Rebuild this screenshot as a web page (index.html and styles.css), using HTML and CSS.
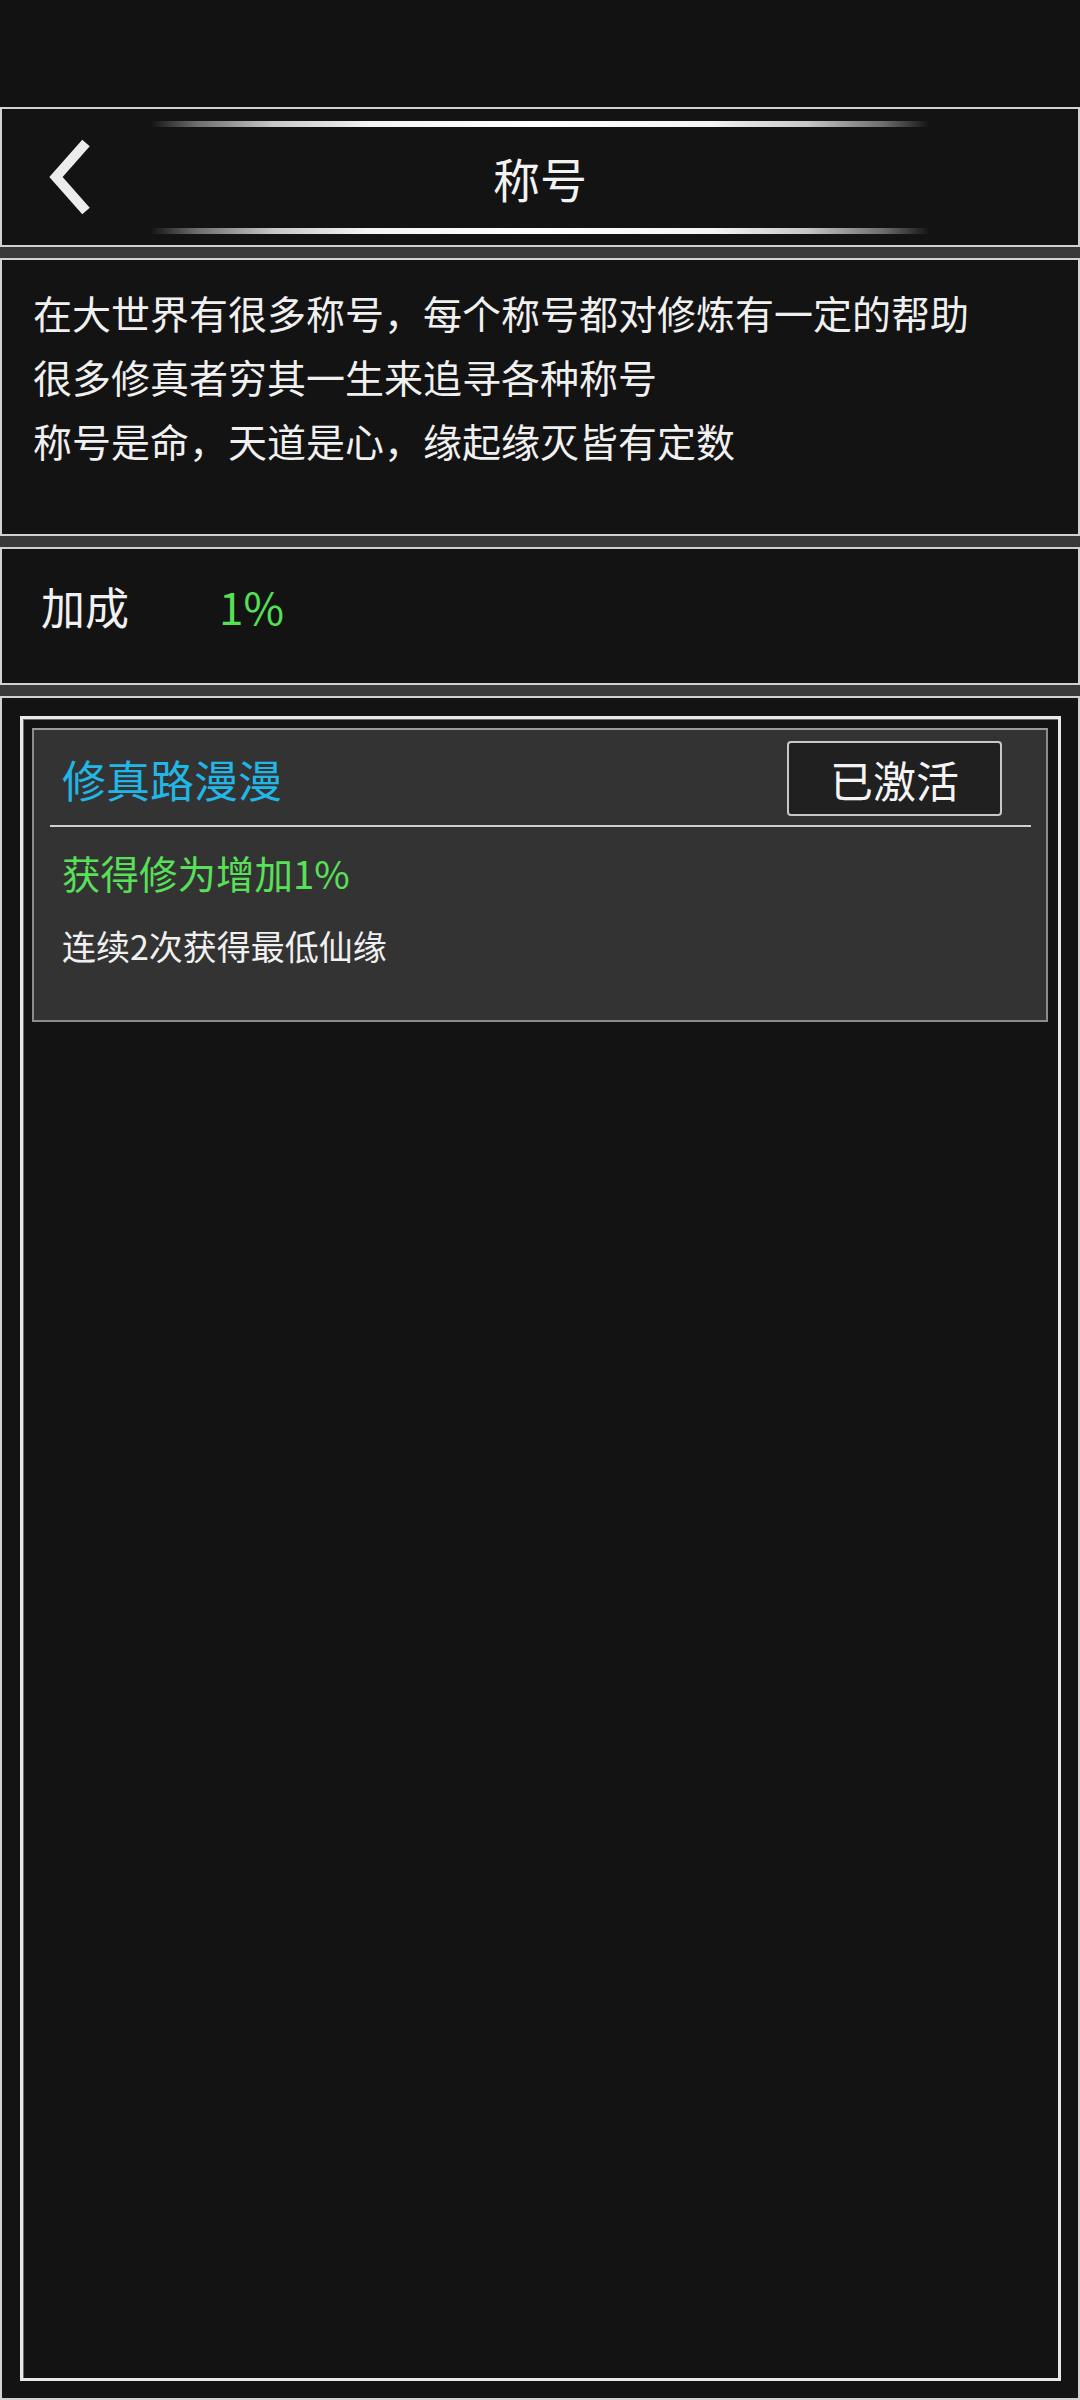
FILE: index.html
```html
<!DOCTYPE html>
<html lang="zh-CN">
<head>
<meta charset="utf-8">
<title>称号</title>
<link rel="stylesheet" href="styles.css">
</head>
<body>
<div class="status"></div>
<div class="page">
  <header class="box header">
    <div class="glow"></div>
    <div class="header-row">
      <div class="back">
        <svg width="60" height="82" viewBox="0 0 60 82" aria-hidden="true">
          <polyline points="46,6 16,40 46,74" fill="none" stroke="#ececec" stroke-width="10" stroke-linecap="butt" stroke-linejoin="miter"/>
        </svg>
      </div>
      <h1 class="title">称号</h1>
      <div class="spacer"></div>
    </div>
    <div class="glow"></div>
  </header>

  <section class="box desc">
    <p>在大世界有很多称号，每个称号都对修炼有一定的帮助</p>
    <p>很多修真者穷其一生来追寻各种称号</p>
    <p>称号是命，天道是心，缘起缘灭皆有定数</p>
  </section>

  <section class="box bonus">
    <span class="bonus-label">加成</span>
    <span class="bonus-value">1%</span>
  </section>

  <section class="box list">
    <div class="frame">
      <div class="card">
        <div class="card-head">
          <span class="card-title">修真路漫漫</span>
          <span class="btn">已激活</span>
        </div>
        <div class="divider"></div>
        <div class="card-effect">获得修为增加1%</div>
        <div class="card-cond">连续2次获得最低仙缘</div>
      </div>
    </div>
  </section>
</div>
</body>
</html>
```

FILE: styles.css
```css
* {
  box-sizing: border-box;
}

html, body {
  margin: 0;
  padding: 0;
}

body {
  width: 1080px;
  height: 2400px;
  overflow: hidden;
  background: #121212;
  font-family: "Noto Sans CJK SC", "Noto Sans", sans-serif;
  color: #f0f0f0;
}

.status {
  height: 107px;
  background: #121212;
}

.page {
  height: 2293px;
  background: #3a3a3a;
  display: flex;
  flex-direction: column;
  gap: 11px;
}

.box {
  border: 2px solid #d2d2d2;
  background: #131313;
}

/* header */
.header {
  height: 140px;
  display: flex;
  flex-direction: column;
  padding: 12px 0 11px;
}

.glow {
  align-self: center;
  width: 780px;
  height: 6px;
  border-radius: 3px;
  background: linear-gradient(to right,
    rgba(255,255,255,0) 0%,
    rgba(170,170,170,0.6) 6%,
    rgba(220,220,220,0.9) 16%,
    #f4f4f4 28%,
    #ffffff 50%,
    #f4f4f4 72%,
    rgba(220,220,220,0.9) 84%,
    rgba(170,170,170,0.6) 94%,
    rgba(255,255,255,0) 100%);
  filter: blur(0.7px);
}

.header-row {
  flex: 1;
  display: grid;
  grid-template-columns: 1fr auto 1fr;
  align-items: center;
}

.back {
  padding-left: 38px;
  display: flex;
  align-items: center;
}

.back svg {
  display: block;
}

.title {
  margin: 0;
  font-size: 47px;
  font-weight: 400;
  line-height: 60px;
  color: #f2f2f2;
  letter-spacing: 0;
}

/* description */
.desc {
  height: 278px;
  padding: 20px 0 0 31px;
}

.desc p {
  margin: 0;
  font-size: 39px;
  line-height: 64px;
  color: #f0f0f0;
  white-space: nowrap;
}

/* bonus */
.bonus {
  height: 138px;
  display: flex;
  align-items: flex-start;
  padding: 27px 0 0 39px;
}

.bonus-label {
  font-size: 44px;
  line-height: 60px;
  color: #f0f0f0;
}

.bonus-value {
  margin-left: 90px;
  font-size: 44px;
  line-height: 60px;
  color: #55e055;
}

/* list */
.list {
  flex: 1;
  padding: 18px 17px 17px 18px;
  display: flex;
}

.frame {
  flex: 1;
  border: 3px solid #e8e8e8;
  box-shadow: inset 1px 1px 0 #6a6a6a;
  background: #131313;
  padding: 9px 10px 0 9px;
}

.card {
  height: 294px;
  background: #333333;
  border: 2px solid #8c8c8c;
  border-top-color: #9a9a9a;
  padding: 0 0 0 28px;
}

.card-head {
  display: flex;
  align-items: center;
  justify-content: space-between;
  padding: 11px 44px 0 0;
}

.card-title {
  font-size: 44px;
  line-height: 60px;
  color: #22b6e6;
}

.btn {
  width: 215px;
  height: 75px;
  border: 2px solid #c8c8c8;
  border-radius: 4px;
  background: #202020;
  display: flex;
  align-items: center;
  justify-content: center;
  font-size: 43px;
  color: #f4f4f4;
}

.divider {
  height: 2px;
  background: #d0d0d0;
  margin: 9px 15px 0 -12px;
}

.card-effect {
  margin-top: 20px;
  font-size: 38.5px;
  line-height: 50px;
  color: #58e058;
}

.card-cond {
  margin-top: 24px;
  font-size: 34px;
  line-height: 50px;
  color: #f0f0f0;
}
```
